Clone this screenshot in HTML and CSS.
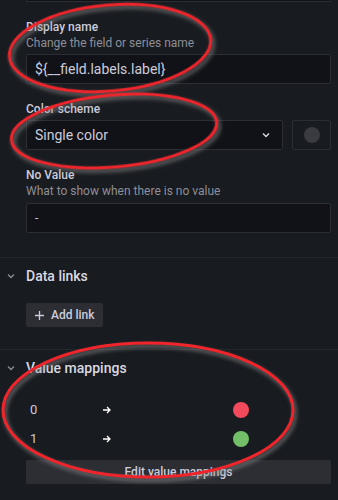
FILE: index.html
```html
<!DOCTYPE html>
<html lang="en">
  <head>
    <meta charset="UTF-8" />
    <meta name="viewport" content="width=device-width, initial-scale=1.0" />
    <title>Field options</title>
    <link rel="stylesheet" href="styles.css">
  </head>
  <body>
    <div class="pane">
      <div class="options">
        <div class="input input-stub"></div>

        <div class="field">
          <div class="label">Display name</div>
          <div class="desc">Change the field or series name</div>
          <div class="input">${__field.labels.label}</div>
        </div>

        <div class="field">
          <div class="label">Color scheme</div>
          <div class="select-row">
            <div class="input select">
              <span>Single color</span>
              <svg class="chev" width="10" height="6" viewBox="0 0 10 6"><path d="M2 1.5l3 3 3-3" fill="none" stroke="#d8d9e0" stroke-width="1.4"/></svg>
            </div>
            <div class="input swatch"><span class="dot dot-dark"></span></div>
          </div>
        </div>

        <div class="field">
          <div class="label">No Value</div>
          <div class="desc">What to show when there is no value</div>
          <div class="input small">-</div>
        </div>
      </div>

      <div class="section">
        <div class="section-head">
          <svg class="caret" width="10" height="6" viewBox="0 0 10 6"><path d="M2 1.5l3 3 3-3" fill="none" stroke="#8e8e98" stroke-width="1.3"/></svg>
          <span>Data links</span>
        </div>
        <div class="section-body">
          <button class="btn">
            <svg width="11" height="11" viewBox="0 0 11 11"><path d="M5.5 1v9M1 5.5h9" stroke="#ccccdc" stroke-width="1.3"/></svg>
            Add link
          </button>
        </div>
      </div>

      <div class="section">
        <div class="section-head">
          <svg class="caret" width="10" height="6" viewBox="0 0 10 6"><path d="M2 1.5l3 3 3-3" fill="none" stroke="#8e8e98" stroke-width="1.3"/></svg>
          <span>Value mappings</span>
        </div>
        <div class="section-body">
          <div class="mapping">
            <span class="val">0</span>
            <svg class="arrow" width="10" height="10" viewBox="0 0 10 10"><path d="M1 5h7M5 2l3 3-3 3" fill="none" stroke="#ffffff" stroke-width="1.3"/></svg>
            <span class="dot dot-red"></span>
          </div>
          <div class="mapping">
            <span class="val">1</span>
            <svg class="arrow" width="10" height="10" viewBox="0 0 10 10"><path d="M1 5h7M5 2l3 3-3 3" fill="none" stroke="#ffffff" stroke-width="1.3"/></svg>
            <span class="dot dot-green"></span>
          </div>
          <button class="btn btn-wide">Edit value mappings</button>
        </div>
      </div>

      <!-- hand-drawn annotation marks -->
      <svg class="marks" width="338" height="500" viewBox="0 0 338 500">
        <ellipse cx="110" cy="48" rx="101" ry="43" transform="rotate(-5 110 48)"/>
        <ellipse cx="114" cy="131" rx="103" ry="36" transform="rotate(-5 114 131)"/>
        <ellipse cx="148" cy="410" rx="145" ry="67"/>
      </svg>
    </div>
  </body>
</html>
```

FILE: styles.css
```css
body {
  margin: 0;
  background-color: #181b1f;
  color: #ccccdc;
  font-family: Roboto, "Liberation Sans", sans-serif;
}

.pane {
  position: relative;
  width: 338px;
  height: 500px;
  overflow: hidden;
}

.options {
  padding: 0 7px 24px 26px;
}

.field {
  margin-top: 17px;
}

.label {
  font-size: 12px;
  font-weight: 500;
  line-height: 16px;
  color: #ccccdc;
}

.desc {
  font-size: 12px;
  line-height: 16px;
  color: #8e8e98;
}

.input {
  box-sizing: border-box;
  height: 30px;
  margin-top: 3px;
  padding: 0 8px;
  background-color: #111217;
  border: 1px solid #2c2e34;
  border-radius: 2px;
  font-size: 14px;
  line-height: 28px;
  color: #ccccdc;
}

.input.small {
  font-size: 12px;
  margin-top: 4px;
}

.input-stub {
  height: 2px;
  margin-top: 0;
  border-top: none;
}

.select-row {
  display: flex;
  gap: 9px;
  margin-top: 3px;
}

.select-row .input {
  margin-top: 0;
}

.select {
  flex: 1;
  display: flex;
  align-items: center;
  justify-content: space-between;
  padding-right: 11px;
}

.swatch {
  width: 39px;
  display: flex;
  align-items: center;
  justify-content: center;
  background-color: #181b1f;
}

.dot {
  display: inline-block;
  width: 16px;
  height: 16px;
  border-radius: 50%;
}

.dot-dark {
  background-color: #3a3b41;
}

.dot-red {
  background-color: #f2495c;
}

.dot-green {
  background-color: #73bf69;
}

.section {
  border-top: 1px solid #25272c;
}

.section-head {
  display: flex;
  align-items: center;
  height: 36px;
  font-size: 14px;
  font-weight: 500;
  color: #d8d9e0;
}

.caret {
  width: 26px;
  flex: none;
  margin-left: -2px;
  margin-right: 2px;
}

.section-body {
  padding: 9px 7px 22px 26px;
}

.btn {
  display: inline-flex;
  align-items: center;
  gap: 6px;
  height: 24px;
  padding: 0 8px;
  border: none;
  border-radius: 2px;
  background-color: #2c2e34;
  color: #ccccdc;
  font-family: inherit;
  font-size: 12px;
  font-weight: 500;
}

.btn-wide {
  display: flex;
  justify-content: center;
  width: 100%;
  margin-top: 7px;
}

.mapping {
  display: flex;
  align-items: center;
  height: 29px;
  font-size: 13px;
}

.val {
  width: 72px;
  padding-left: 4px;
}

.arrow {
  margin-right: 121px;
}

.marks {
  position: absolute;
  left: 0;
  top: 0;
  pointer-events: none;
}

.marks ellipse {
  fill: none;
  stroke: #f0252b;
  stroke-width: 3;
  filter: drop-shadow(2px 3px 2px rgba(140, 140, 140, 0.8));
}
```
